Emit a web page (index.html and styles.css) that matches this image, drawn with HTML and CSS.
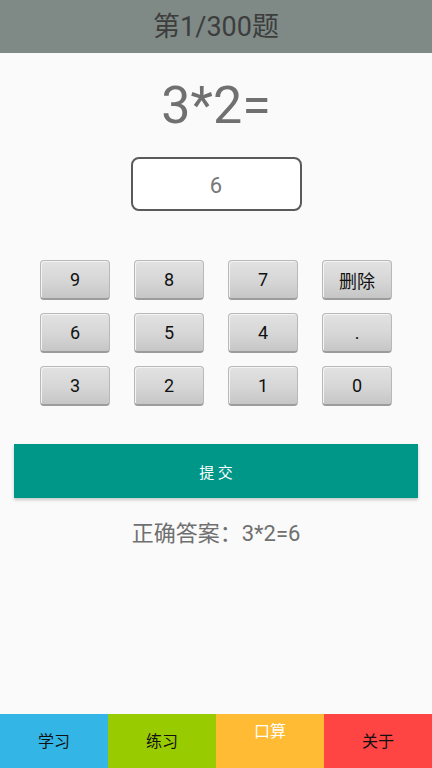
FILE: index.html
```html
<!DOCTYPE html>
<html lang="zh-CN">
<head>
    <meta charset="UTF-8">
    <meta name="viewport" content="width=device-width, initial-scale=1.0">
    <title>口算练习</title>
    <link rel="stylesheet" href="styles.css">
</head>
<body>
    <div class="app">
        <div class="header">第1/300题</div>

        <div class="main">
            <div class="question">3*2=</div>
            <div class="answer-box">6</div>

            <div class="keypad">
                <button class="key">9</button>
                <button class="key">8</button>
                <button class="key">7</button>
                <button class="key">删除</button>
                <button class="key">6</button>
                <button class="key">5</button>
                <button class="key">4</button>
                <button class="key">.</button>
                <button class="key">3</button>
                <button class="key">2</button>
                <button class="key">1</button>
                <button class="key">0</button>
            </div>

            <button class="submit">提 交</button>

            <div class="result">正确答案：3*2=6</div>
        </div>

        <div class="tabs">
            <div class="tab tab-study">学习</div>
            <div class="tab tab-practice">练习</div>
            <div class="tab tab-oral">口算</div>
            <div class="tab tab-about">关于</div>
        </div>
    </div>
</body>
</html>
```

FILE: styles.css
```css
* {
    box-sizing: border-box;
}
body {
    margin: 0;
    background: #fafafa;
    font-family: Roboto, "Noto Sans CJK SC", sans-serif;
}
.app {
    height: 768px;
    display: flex;
    flex-direction: column;
}
.header {
    height: 53px;
    background: #7f8a86;
    color: #3d3d3d;
    font-size: 27px;
    line-height: 54px;
    text-align: center;
}
.main {
    flex: 1;
    display: flex;
    flex-direction: column;
    align-items: center;
}
.question {
    margin-top: 24px;
    font-size: 52px;
    line-height: 58px;
    color: #707070;
}
.answer-box {
    margin-top: 22px;
    width: 171px;
    height: 54px;
    border: 2px solid #5a5a5a;
    border-radius: 8px;
    background: #fff;
    color: #777;
    font-size: 22px;
    line-height: 54px;
    text-align: center;
}
.keypad {
    margin-top: 49px;
    display: grid;
    grid-template-columns: repeat(4, 70px);
    column-gap: 24px;
    row-gap: 13px;
}
.key {
    height: 40px;
    padding: 0;
    border: 1px solid #b8b8b8;
    border-bottom: 2px solid #9c9c9c;
    border-radius: 4px;
    background: linear-gradient(#e2e2e2, #d6d6d6 55%, #c6c6c6);
    box-shadow: inset 1px 1px 0 #f4f4f4;
    color: #111;
    font-family: inherit;
    font-size: 18px;
}
.submit {
    margin-top: 38px;
    width: 404px;
    height: 54px;
    border: none;
    background: #009688;
    box-shadow: 0 2px 3px rgba(0,0,0,0.2);
    color: #fff;
    font-family: inherit;
    font-size: 15px;
}
.result {
    margin-top: 17px;
    font-size: 22px;
    color: #707070;
}
.tabs {
    height: 54px;
    display: grid;
    grid-template-columns: repeat(4, 1fr);
}
.tab {
    font-size: 16px;
    text-align: center;
    line-height: 56px;
    color: #111;
}
.tab-study {
    background: #33b5e5;
}
.tab-practice {
    background: #99cc00;
}
.tab-oral {
    background: #ffbb33;
    color: #fff;
    line-height: 36px;
}
.tab-about {
    background: #ff4444;
}
```
